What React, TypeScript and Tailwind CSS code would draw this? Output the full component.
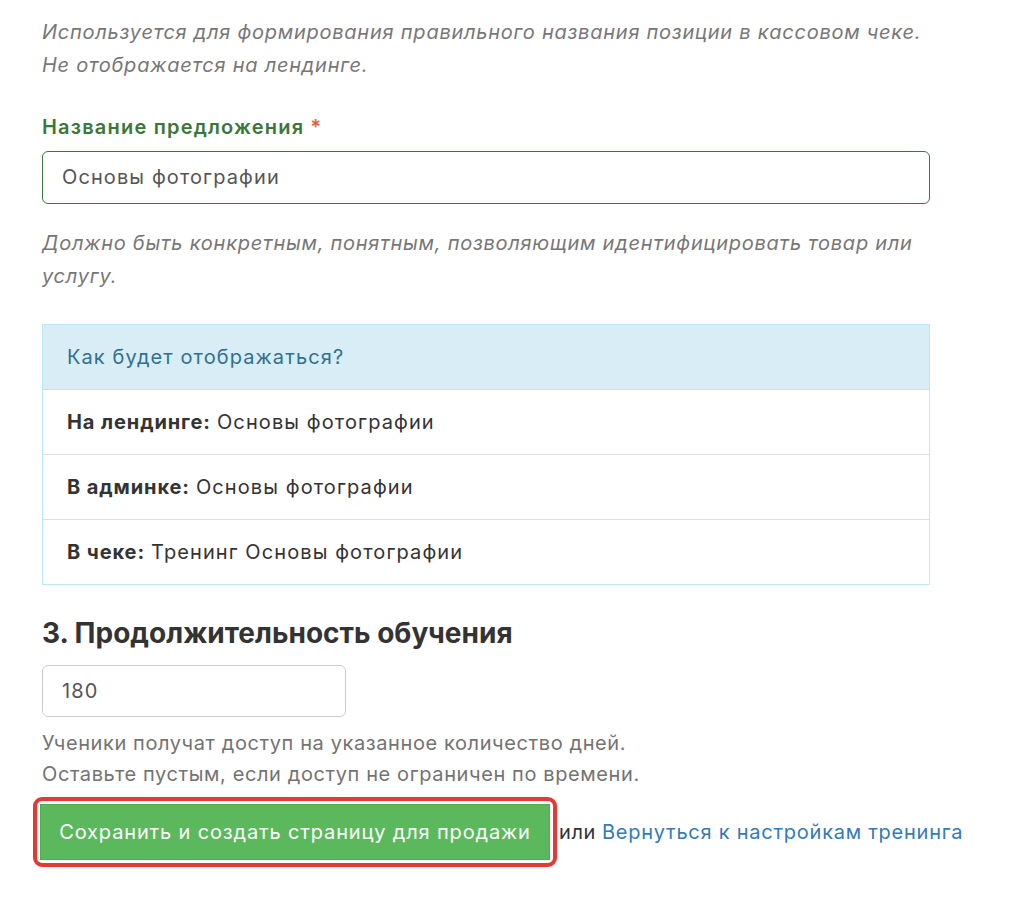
export default function App() {
  const rows: [string, string][] = [
    ["На лендинге:", "Основы фотографии"],
    ["В админке:", "Основы фотографии"],
    ["В чеке:", "Тренинг Основы фотографии"],
  ];

  return (
    <div className="min-h-[920px] bg-white pl-[42px] text-[20px] leading-[33px] tracking-[1.1px] text-[#333] [font-family:Inter,'Noto_Sans',sans-serif]">
      <p className="pt-[16px] italic tracking-[0.75px] text-[#777]">
        Используется для формирования правильного названия позиции в кассовом чеке.
        <br />
        Не отображается на лендинге.
      </p>

      <label className="mt-[29px] flex items-center gap-[6px] font-semibold tracking-[1.2px] text-[#3c763d]">
        Название предложения
        <span className="text-[#e8573f]">*</span>
      </label>
      <div className="mt-[7px] flex h-[53px] w-[888px] items-center rounded-[6px] border border-[#3c763d] px-[19px] text-[#555]">
        Основы фотографии
      </div>

      <p className="mt-[23px] italic tracking-[0.75px] text-[#777]">
        Должно быть конкретным, понятным, позволяющим идентифицировать товар или
        <br />
        услугу.
      </p>

      <div className="mt-[31px] w-[888px] border border-[#bce8f1]">
        <div className="flex h-[64px] items-center bg-[#d9edf7] px-[24px] text-[#31708f]">
          Как будет отображаться?
        </div>
        {rows.map(([k, v]) => (
          <div key={k} className="flex h-[65px] items-center border-t border-[#ddd] px-[24px]">
            <b className="mr-[6px] font-bold tracking-[0.9px]">{k}</b>
            {v}
          </div>
        ))}
      </div>

      <h3 className="mt-[30px] text-[28px] leading-[36px] font-bold tracking-normal text-[#333]">
        3. Продолжительность обучения
      </h3>
      <div className="mt-[14px] flex h-[52px] w-[304px] items-center rounded-[6px] border border-[#ccc] px-[19px] text-[#555]">
        180
      </div>
      <p className="mt-[11px] leading-[31px] tracking-[0.6px] text-[#737373]">
        Ученики получат доступ на указанное количество дней.
        <br />
        Оставьте пустым, если доступ не ограничен по времени.
      </p>

      <div className="-ml-[9px] mt-[7px] flex items-center whitespace-nowrap">
        <div className="rounded-[9px] border-[4px] border-[#e53935] p-[3px]">
          <button className="flex h-[56px] w-[510px] items-center justify-center border border-[#4cae4c] bg-[#5cb85c] text-[20px] tracking-[0.85px] text-white">
            Сохранить и создать страницу для продажи
          </button>
        </div>
        <span className="ml-[2px] tracking-[0.6px]">или</span>
        <a href="#" className="ml-[6px] tracking-[0.75px] text-[#337ab7]">
          Вернуться к настройкам тренинга
        </a>
      </div>
    </div>
  );
}
